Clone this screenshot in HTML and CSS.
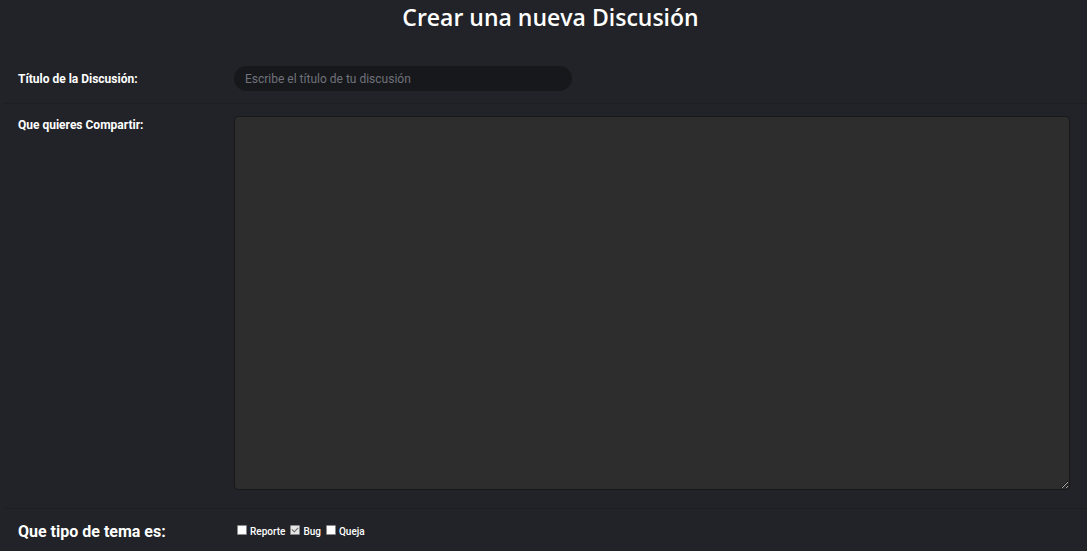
FILE: index.html
```html
<!DOCTYPE html>
<html lang="es">
<head>
<meta charset="utf-8">
<title>Crear una nueva Discusión</title>
<link rel="stylesheet" href="styles.css">
</head>
<body>
<h1 class="page-title">Crear una nueva Discusión</h1>
<form class="form">
  <div class="row row-title">
    <label class="label" for="t">Título de la Discusión:</label>
    <div class="field"><input id="t" class="title-input" type="text" placeholder="Escribe el título de tu discusión"></div>
  </div>
  <div class="row row-body">
    <label class="label" for="b">Que quieres Compartir:</label>
    <div class="field"><textarea id="b" class="body-input"></textarea></div>
  </div>
  <div class="row row-type">
    <span class="label label-big">Que tipo de tema es:</span>
    <div class="field checks">
      <label class="check"><input type="checkbox"><span>Reporte</span></label>
      <label class="check"><input type="checkbox" checked><span>Bug</span></label>
      <label class="check"><input type="checkbox"><span>Queja</span></label>
    </div>
  </div>
</form>
</body>
</html>
```

FILE: styles.css
```css
html, body {
  margin: 0;
  padding: 0;
  background: #222328;
  color: #ffffff;
  font-family: Roboto, "Liberation Sans", sans-serif;
}
.page-title {
  margin: 0;
  padding-top: 1px;
  height: 54px;
  box-sizing: border-box;
  text-align: center;
  font-family: "Open Sans", sans-serif;
  font-weight: 600;
  font-size: 23px;
  line-height: 32px;
  padding-left: 14px;
}
.form {
  display: flex;
  flex-direction: column;
  padding-left: 4px;
}
.row {
  display: grid;
  grid-template-columns: 230px 1fr;
  border-bottom: 1px solid #1d1e22;
  padding-right: 17px;
}
.label {
  padding-left: 14px;
  font-weight: 700;
  font-size: 12px;
}
.row-title {
  align-items: center;
  height: 49px;
}
.title-input {
  display: block;
  width: 338px;
  height: 25px;
  box-sizing: border-box;
  border: none;
  border-radius: 13px;
  background: #17181c;
  color: #ccc;
  padding: 0 11px;
  font-family: Roboto, sans-serif;
  font-size: 12px;
  outline: none;
}
.title-input::placeholder { color: #6f727a; }
.row-body {
  padding-top: 12px;
  padding-bottom: 18px;
}
.row-body .label { padding-top: 2px; }
.body-input {
  display: block;
  width: 100%;
  height: 374px;
  box-sizing: border-box;
  background: #2d2d2d;
  border: 1px solid #18181b;
  border-radius: 4px;
  resize: vertical;
  color: #fff;
  outline: none;
}
.row-type {
  align-items: center;
  height: 44px;
  border-bottom: none;
}
.label-big { font-size: 16px; }
.checks {
  display: flex;
  align-items: center;
  gap: 5px;
  padding-left: 3px;
}
.check {
  display: flex;
  align-items: center;
  font-size: 10px;
  font-weight: 500;
  gap: 3px;
}
.check input {
  appearance: none;
  -webkit-appearance: none;
  margin: 0 0 2px 0;
  width: 10px;
  height: 10px;
  box-sizing: border-box;
  background: #ffffff;
  border: 1px solid #8a8a8a;
  border-radius: 1px;
  position: relative;
}
.check input:checked {
  background: #e6e6e6;
}
.check input:checked::after {
  content: "";
  position: absolute;
  left: 2px;
  top: 0px;
  width: 3px;
  height: 5px;
  border: solid #6b6b6b;
  border-width: 0 1px 1px 0;
  transform: rotate(45deg);
}
```
